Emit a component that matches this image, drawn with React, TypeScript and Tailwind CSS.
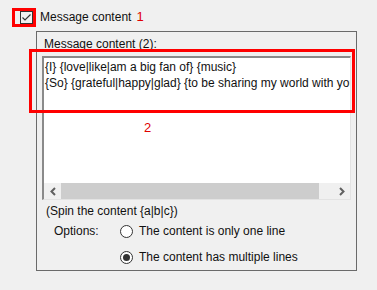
import React from "react"

const font = { fontFamily: '"Liberation Sans", Arial, sans-serif' }

function Check() {
  return (
    <span className="relative flex h-[13px] w-[13px] items-center justify-center border border-[#333333] bg-[#f0f0f0]">
      <svg width="11" height="11" viewBox="0 0 11 11">
        <path d="M1.5 5.5 L4 8 L9.5 2.5" fill="none" stroke="#333333" strokeWidth="1.2" />
      </svg>
    </span>
  )
}

function Radio({ checked }: { checked?: boolean }) {
  return (
    <span className="flex h-[13px] w-[13px] items-center justify-center rounded-full border border-[#333333] bg-white">
      {checked && <span className="h-[7px] w-[7px] rounded-full bg-[#333333]" />}
    </span>
  )
}

function Arrow({ dir }: { dir: "l" | "r" }) {
  return (
    <svg width="6" height="9" viewBox="0 0 6 9">
      <path
        d={dir === "l" ? "M5 1 L1.5 4.5 L5 8" : "M1 1 L4.5 4.5 L1 8"}
        fill="none"
        stroke="#606060"
        strokeWidth="2"
      />
    </svg>
  )
}

export default function App() {
  return (
    <div
      className="relative h-[290px] w-[377px] overflow-hidden bg-[#f0f0f0] text-[12px] leading-[16px] text-[#111]"
      style={font}
    >
      {/* checkbox row */}
      <div className="flex items-center pl-[20px] pt-[9px]">
        <Check />
        <span className="ml-[7px]">Message content</span>
        <span className="ml-[5px] text-[13px] text-[#e00000]">1</span>
      </div>
      <div className="pointer-events-none absolute left-[12px] top-[8px] h-[19px] w-[24px] border-[3px] border-[#ff0000]" />

      {/* group box */}
      <div className="ml-[36px] mt-[6px] flex h-[240px] w-[321px] flex-col border border-[#6a6a6a]">
        <div className="pl-[7px] pt-[4px]">Message content (2):</div>

        <div className="relative ml-[5px] mt-[4px] flex h-[144px] w-[309px] flex-col border-b border-l-2 border-r border-t-2 border-b-[#e3e3e3] border-l-[#8a8a8a] border-r-[#e3e3e3] border-t-[#8a8a8a] bg-white">
          <div className="flex-1 overflow-hidden whitespace-nowrap pl-[1px] pt-[1px]">
            <div>{"{I} {love|like|am a big fan of} {music}"}</div>
            <div>{"{So} {grateful|happy|glad} {to be sharing my world with you}"}</div>
          </div>
          <div className="flex h-[16px] items-center bg-[#f0f0f0]">
            <div className="flex h-[16px] w-[17px] items-center justify-center">
              <Arrow dir="l" />
            </div>
            <div className="h-[16px] w-[258px] bg-[#cdcdcd]" />
            <div className="flex-1" />
            <div className="flex h-[16px] w-[17px] items-center justify-center">
              <Arrow dir="r" />
            </div>
          </div>
          <span className="absolute left-[100px] top-[62px] text-[13px] text-[#e00000]">2</span>
        </div>

        <div className="pl-[9px] pt-[3px]">(Spin the content {"{a|b|c}"})</div>

        <div className="mt-[4px] flex items-center pl-[17px]">
          <span className="w-[66px]">Options:</span>
          <Radio />
          <span className="ml-[6px]">The content is only one line</span>
        </div>
        <div className="mt-[10px] flex items-center pl-[83px]">
          <Radio checked />
          <span className="ml-[6px]">The content has multiple lines</span>
        </div>
      </div>

      <div className="pointer-events-none absolute left-[29px] top-[49px] h-[64px] w-[326px] border-[3px] border-[#ff0000]" />
    </div>
  )
}
